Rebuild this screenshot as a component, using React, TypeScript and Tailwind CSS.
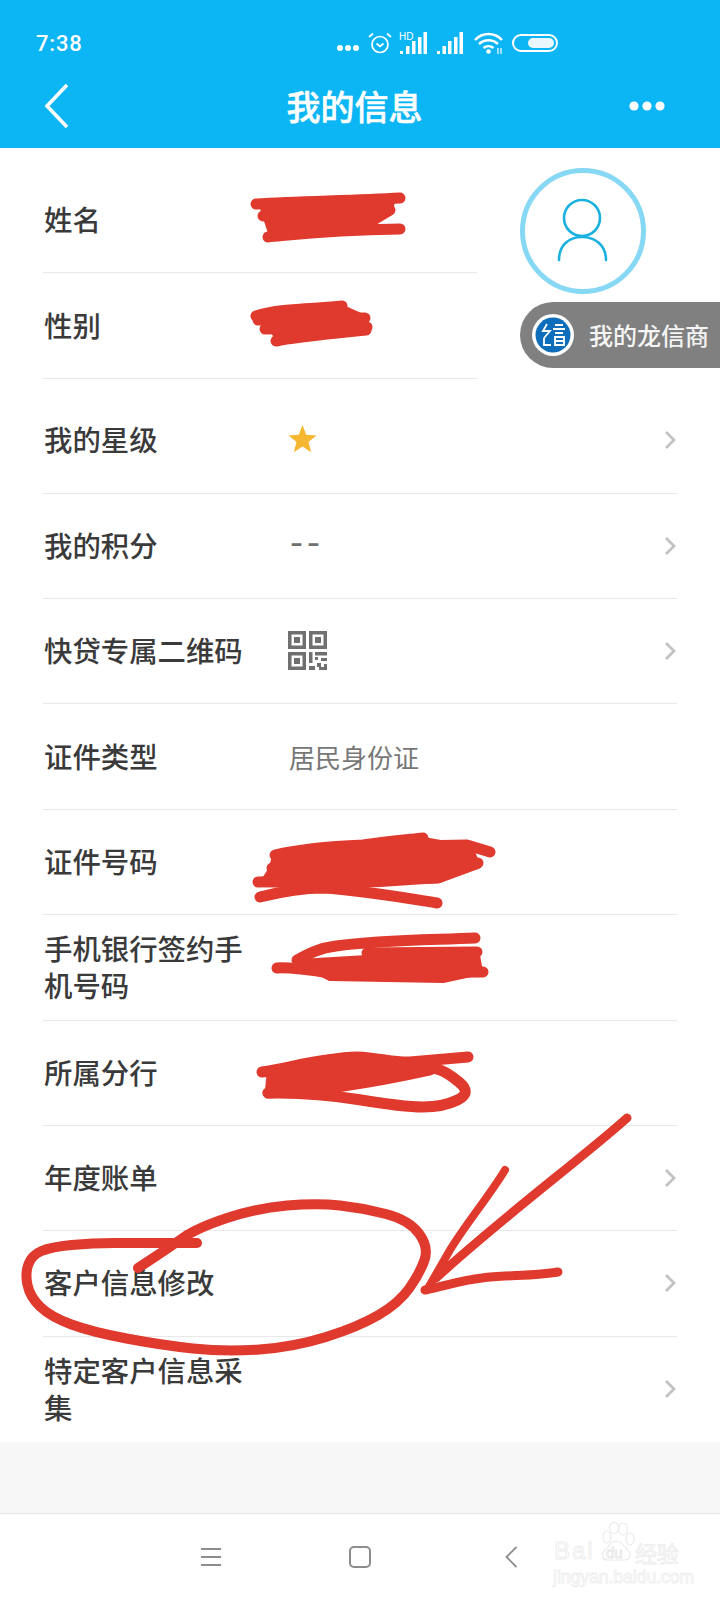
import { ReactNode } from "react";

const cjk = "font-['Noto_Sans_CJK_SC','Noto_Sans',sans-serif]";

// rounds a list of points into a hand-drawn looking line
function smooth(pts: number[][]) {
  let d = `M${pts[0][0]} ${pts[0][1]}`;
  for (let i = 1; i < pts.length - 1; i++) {
    const mx = (pts[i][0] + pts[i + 1][0]) / 2;
    const my = (pts[i][1] + pts[i + 1][1]) / 2;
    d += `Q${pts[i][0]} ${pts[i][1]} ${mx} ${my}`;
  }
  const end = pts[pts.length - 1];
  return `${d}L${end[0]} ${end[1]}`;
}

function Chevron() {
  return (
    <svg width="12" height="20" viewBox="0 0 12 20" fill="none" className="ml-auto mr-px shrink-0">
      <path d="M2 2l8 8-8 8" stroke="#c2c2c2" strokeWidth="2.800" />
    </svg>
  );
}

function QrCode() {
  return (
    <svg width="39" height="39" viewBox="0 0 39 39" fill="#707070" className="-ml-px -mt-[2px]">
      <path fillRule="evenodd" d="M0 0h18v18H0zM3.500 3.500v11h11v-11z" />
      <path d="M6 6h6v6H6z" />
      <path fillRule="evenodd" d="M21 0h18v18H21zM24.500 3.500v11h11v-11z" />
      <path d="M27 6h6v6h-6z" />
      <path fillRule="evenodd" d="M0 21h18v18H0zM3.500 24.500v11h11v-11z" />
      <path d="M6 27h6v6H6z" />
      <path d="M21 21h3.500v11H21zM27 21h12v3.500H27zM27 26h3v3h-3zM33 27h6v3h-6zM21 35h6v4h-6zM29 32h4v4h-4zM36 33h3v6h-3zM31 36h5v3h-5z" />
    </svg>
  );
}

function Star() {
  return (
    <svg width="29" height="28" viewBox="0 0 29 28" fill="#f5b631" className="-ml-px -mt-[2px]">
      <path d="M14.500 0l3.700 9.800 10.300.6-8 6.600 2.700 10.200-8.700-5.700-8.700 5.700L8.500 17l-8-6.600 10.300-.6z" />
    </svg>
  );
}

function Row({ label, value, arrow, flat }: { label: string; value?: ReactNode; arrow?: boolean; flat?: boolean }) {
  return (
    <div className={`h-[105.4px] flex items-center ${flat ? "" : "border-b border-[#e8e8e8]"}`}>
      <div className="w-[246px] shrink-0 pl-px pb-[3px]">
        <div className="w-[205px] text-[28.400px] font-medium leading-[37px] text-[#3a3a3a]">{label}</div>
      </div>
      {value}
      {arrow && <Chevron />}
    </div>
  );
}

function StatusIcons() {
  return (
    <div className="flex items-center">
      <svg width="22" height="20" viewBox="0 0 22 20" fill="white" className="mr-[9px]">
        <circle cx="3" cy="15" r="3" />
        <circle cx="11" cy="15" r="3" />
        <circle cx="19" cy="15" r="3" />
      </svg>
      <svg width="24" height="22" viewBox="0 0 24 22" fill="none" stroke="white" className="mr-[7px]">
        <circle cx="12" cy="12.500" r="8" strokeWidth="1.700" />
        <path d="M8.500 11.500l3.500 3 3.500-3M1 5l4-3.500M23 5l-4-3.500" strokeWidth="1.700" />
      </svg>
      <svg width="28" height="22" viewBox="0 0 28 22" fill="white" className="mr-[10px]">
        <path d="M1 19h3v3H1zM7 14h3.500v8H7zM13 9h3.500v13H13zM19 5h3.500v17H19zM24.500 0H28v22h-3.500z" />
        <text x="0" y="8" fontSize="10" fontFamily="Liberation Sans, sans-serif">HD</text>
      </svg>
      <svg width="26" height="22" viewBox="0 0 26 22" fill="white" className="mr-[11px]">
        <path d="M0 19h3v3H0zM5.500 14H9v8H5.500zM11 9h3.500v13H11zM17 5h3.500v17H17zM22.500 0H26v22h-3.500z" />
      </svg>
      <svg width="29" height="22" viewBox="0 0 29 22" fill="none" className="mr-[9px]">
        <path d="M1 8c7.500-8 19.500-8 27 0M5 12c5.500-5 13.500-5 19 0M9.500 16c2.800-2.500 7-2.500 10 0" stroke="white" strokeWidth="2.500" />
        <circle cx="14.500" cy="19.500" r="2.300" fill="white" />
        <path d="M24 16v6M27 16v6" stroke="white" strokeWidth="1.200" />
      </svg>
      <div className="w-[46px] h-[18px] rounded-full border-2 border-white p-[2px] flex justify-end">
        <div className="w-[26px] h-full rounded-[5px] bg-[#eaf8fe]" />
      </div>
    </div>
  );
}

// red marker strokes drawn over the list
function MarkerLayer() {
  const blocks = [
    "M262 205L392 200L390 213L375 222L375 228L272 236Z",
    "M258 316L345 309L365 318L362 328L280 339L268 326Z",
    "M275 856L423 840L470 848L478 866L440 880L380 884L323 886L262 884L272 868Z",
    "M300 962L367 958L477 955L480 972L443 980L330 978Z",
    "M270 1070L357 1058L430 1062L430 1072L370 1082L310 1088L268 1090Z",
  ];
  const lines = [
    "M256 204C300 201 350 201 400 198",
    "M263 216L390 210",
    "M268 237C300 234 330 230 400 229",
    "M256 316C280 308 320 309 342 306",
    "M258 320L365 318",
    "M265 329L367 327",
    "M276 341C300 336 330 334 366 330",
    "M275 855C300 849 340 846 363 845C385 842 405 840 423 838",
    "M363 847L467 845L490 852",
    "M272 868L478 863",
    "M258 882L438 878",
    "M260 897C280 892 300 888 323 888C360 890 400 897 437 903",
    "M277 968C290 967 310 970 330 973L483 972",
    "M297 960C310 953 320 948 336 946C380 940 430 940 475 938",
    "M367 953L477 952",
    "M262 1072C290 1068 320 1058 357 1057C380 1058 395 1063 410 1062L468 1057",
    smooth([[268, 1093], [313, 1092], [403, 1107], [443, 1107], [472, 1093], [447, 1072], [430, 1067]]),
    "M268 1093C320 1090 363 1085 430 1070",
  ];
  const ring = smooth([
    [197, 1243], [138, 1243], [92, 1243], [51, 1247], [32, 1255], [25, 1273], [30, 1297], [51, 1317],
    [92, 1332], [161, 1345], [225, 1352], [294, 1347], [358, 1327], [399, 1303], [420, 1273], [429, 1247],
    [409, 1220], [363, 1208], [317, 1203], [257, 1208], [197, 1228], [170, 1247], [138, 1268],
  ]);
  return (
    <svg className="absolute inset-0 pointer-events-none" width="720" height="1600" viewBox="0 0 720 1600" fill="none" stroke="#e0392d" strokeLinecap="round" strokeLinejoin="round">
      {blocks.map((d) => (
        <path key={d} d={d} fill="#e0392d" strokeWidth="6" />
      ))}
      {lines.map((d) => (
        <path key={d} d={d} strokeWidth="11" />
      ))}
      <path d={ring} strokeWidth="10" />
      <path d="M627 1118C580 1160 505 1215 436 1278" strokeWidth="9" />
      <path d="M505 1170C490 1195 465 1225 450 1250L427 1290" strokeWidth="8" />
      <path d="M425 1290C445 1286 462 1280 482 1278C505 1275 535 1276 558 1272" strokeWidth="9" />
    </svg>
  );
}

function Watermark() {
  return (
    <div className="absolute left-[553px] top-[1522px] w-[130px] h-[62px] pointer-events-none">
      <span className="absolute left-[1px] top-[16px] text-[24px] leading-[26px] tracking-[2px] font-['Liberation_Sans',sans-serif] text-white [-webkit-text-stroke:1px_#eeeeee]">Bai</span>
      <svg className="absolute left-[46px] top-0" width="36" height="40" viewBox="0 0 36 40" fill="white" stroke="#eaeaea" strokeWidth="1.200">
        <ellipse cx="8" cy="15" rx="4" ry="6" />
        <ellipse cx="15" cy="6" rx="4.500" ry="5.500" />
        <ellipse cx="24" cy="7" rx="4.500" ry="6" />
        <ellipse cx="31" cy="17" rx="4" ry="6" />
        <path d="M17 19c6 0 8 5 12 9 4 5 2 10-4 10H9c-6 0-7-6-3-10 4-3 5-9 11-9z" />
      </svg>
      <span className="absolute left-[53px] top-[23px] text-[15px] leading-[16px] font-['Liberation_Sans',sans-serif] text-white [-webkit-text-stroke:1px_#eaeaea]">du</span>
      <span className={`absolute left-[82px] top-[18px] text-[22px] leading-[24px] text-white [-webkit-text-stroke:1px_#eeeeee] ${cjk}`}>经验</span>
      <span className="absolute left-0 top-[47px] text-[17.500px] leading-[16px] whitespace-nowrap font-['Liberation_Sans',sans-serif] text-white [-webkit-text-stroke:1px_#f0f0f0]">jingyan.baidu.com</span>
    </div>
  );
}

export default function App() {
  return (
    <div className={`relative w-[720px] h-[1600px] flex flex-col bg-white overflow-hidden ${cjk}`}>
      <header className="h-[148px] shrink-0 bg-[#0cb5f4] text-white">
        <div className="h-[64px] pt-[22px] pl-[36px] pr-[162px] flex justify-between">
          <div className="h-[42px] flex items-center text-[22px] font-medium tracking-[0.8px] font-['Roboto',sans-serif]">7:38</div>
          <div className="h-[42px] flex items-center">
            <StatusIcons />
          </div>
        </div>
        <div className="h-[84px] px-[44px] flex items-center">
          <div className="flex-1">
            <svg width="25" height="46" viewBox="0 0 25 46" fill="none">
              <path d="M23 2L3 23l20 21" stroke="white" strokeWidth="3.600" />
            </svg>
          </div>
          <h1 className="text-[34px] font-medium leading-none [-webkit-text-stroke:0.5px_white]">我的信息</h1>
          <div className="flex-1 flex justify-end pr-[11px]">
            <svg width="36" height="10" viewBox="0 0 36 10" fill="white">
              <circle cx="5" cy="5" r="4.600" />
              <circle cx="18" cy="5" r="4.600" />
              <circle cx="31" cy="5" r="4.600" />
            </svg>
          </div>
        </div>
      </header>

      <div className="flex pt-[20px] pl-[43px]">
        <div className="w-[434px]">
          <Row label="姓名" />
          <Row label="性别" />
        </div>
        <div className="ml-[43px] w-[126px] h-[126px] rounded-full border-[5px] border-[#86d8f4] flex items-center justify-center">
          <svg width="116" height="116" viewBox="0 0 116 116" fill="none" stroke="#1ab0e0" strokeWidth="2.600">
            <circle cx="57" cy="45" r="18" />
            <path d="M34 87C34 73 43 64 57 64C71 64 81 73 81 87" strokeLinecap="round" />
          </svg>
        </div>
      </div>

      <div className="mt-[9.400px] mx-[43px]">
        <Row label="我的星级" arrow value={<Star />} />
        <Row label="我的积分" arrow value={<span className="-ml-[3px] text-[35px] leading-none tracking-[-4px] text-[#707070] font-['Liberation_Mono',monospace]">--</span>} />
        <Row label="快贷专属二维码" arrow value={<QrCode />} />
        <Row label="证件类型" value={<span className="text-[26px] text-[#777] pb-[1px]">居民身份证</span>} />
        <Row label="证件号码" />
        <Row label="手机银行签约手机号码" />
        <Row label="所属分行" />
        <Row label="年度账单" arrow />
        <Row label="客户信息修改" arrow />
        <Row label="特定客户信息采集" arrow flat />
      </div>

      <div className="flex-1 bg-[#f7f7f7]" />

      <nav className="h-[87px] shrink-0 border-t border-[#e4e4e4] pl-[201px] flex items-center">
        <svg width="20" height="18" viewBox="0 0 20 18" fill="none" stroke="#8c8c8c" strokeWidth="1.800">
          <path d="M0 1h20M0 9h20M0 17h20" />
        </svg>
        <div className="ml-[128px] w-[22px] h-[22px] rounded-[5px] border-2 border-[#8c8c8c]" />
        <svg width="12" height="22" viewBox="0 0 12 22" fill="none" stroke="#8c8c8c" strokeWidth="1.800" className="ml-[134px]">
          <path d="M11.500 1L1.500 11l10 10" />
        </svg>
      </nav>

      <div className="absolute top-[302px] right-0 w-[200px] h-[66px] rounded-l-[33px] bg-[#808080] flex items-center pl-[12px]">
        <svg width="42" height="42" viewBox="0 0 42 42" fill="none">
          <circle cx="21" cy="21" r="21" fill="white" />
          <circle cx="21" cy="21" r="17.500" fill="#0f6ebb" />
          <path d="M15 10l-4 7h7l-6 7M12 24v7h7M23 11h8M21 15h12M23 19h8M23 23h9v8h-9zM23 27h9" stroke="white" strokeWidth="1.800" />
        </svg>
        <span className="ml-[15px] text-[24px] font-medium leading-none whitespace-nowrap text-[#f5f5f5]">我的龙信商</span>
      </div>

      <Watermark />
      <MarkerLayer />
    </div>
  );
}
